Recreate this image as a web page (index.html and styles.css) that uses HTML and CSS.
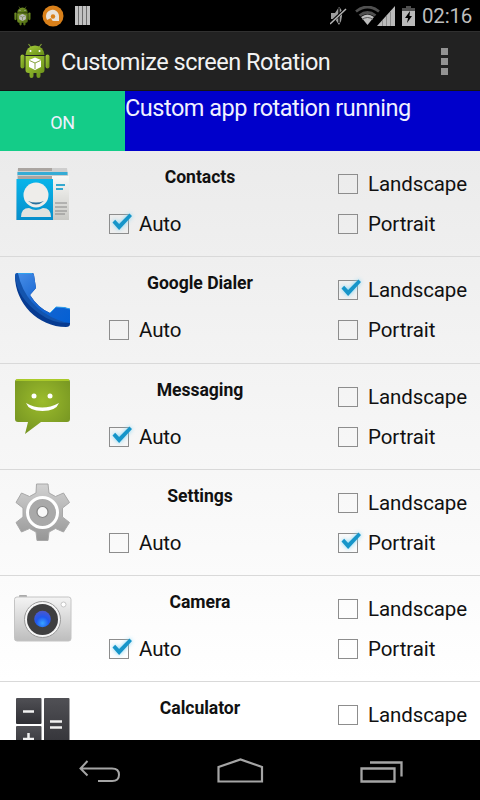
FILE: index.html
```html
<!DOCTYPE html>
<html lang="en">
<head>
<meta charset="utf-8">
<title>Customize screen Rotation</title>
<link rel="stylesheet" href="styles.css">
</head>
<body>
<svg class="defs" width="0" height="0">
  <defs>
    <linearGradient id="droid" x1="0" x2="1" y2="1"><stop offset="0" stop-color="#a8cf3c"/><stop offset="1" stop-color="#658c16"/></linearGradient>
    <linearGradient id="sky" x1="0" x2="0" y2="1"><stop offset="0" stop-color="#08b5ea"/><stop offset="1" stop-color="#078ecb"/></linearGradient>
    <linearGradient id="paper" x1="0" x2="0" y2="1"><stop offset="0" stop-color="#f8f8f6"/><stop offset="1" stop-color="#c9c9c5"/></linearGradient>
    <linearGradient id="phone" x1="0" x2="1" y2="1"><stop offset="0" stop-color="#4a90e8"/><stop offset=".5" stop-color="#1664d0"/><stop offset="1" stop-color="#0460d4"/></linearGradient>
    <radialGradient id="bubble" cx=".5" cy=".4" r=".7"><stop offset="0" stop-color="#9cbc2c"/><stop offset="1" stop-color="#739221"/></radialGradient>
    <linearGradient id="steel" x1="0" x2="0" y2="1"><stop offset="0" stop-color="#d2d2d2"/><stop offset="1" stop-color="#969696"/></linearGradient>
    <linearGradient id="body" x1="0" x2="0" y2="1"><stop offset="0" stop-color="#f4f4f4"/><stop offset="1" stop-color="#bdbdbd"/></linearGradient>
    <radialGradient id="lens" cx=".5" cy=".75" r=".75"><stop offset="0" stop-color="#38a4ff"/><stop offset=".5" stop-color="#2058ee"/><stop offset="1" stop-color="#4e58c8"/></radialGradient>
    <linearGradient id="key" x1="0" x2="0" y2="1"><stop offset="0" stop-color="#505055"/><stop offset="1" stop-color="#2f2f34"/></linearGradient>
    <symbol id="android" viewBox="0 0 30 36">
      <path d="M8.500 1l3 4M21.500 1l-3 4" stroke="#7e9c35" stroke-width="1.200"/>
      <path d="M5.500 12a9.500 9.500 0 0 1 19 0z" fill="url(#droid)"/>
      <circle cx="10.500" cy="8" r="1" fill="#fff"/><circle cx="19.500" cy="8" r="1" fill="#fff"/>
      <rect x=".5" y="11.500" width="4" height="14" rx="2" fill="url(#droid)"/><rect x="25.500" y="11.500" width="4" height="14" rx="2" fill="url(#droid)"/>
      <path d="M5.500 13h19v14q0 3-3 3h-1v3a2 2 0 0 1-4 0v-3h-3v3a2 2 0 0 1-4 0v-3h-1q-3 0-3-3z" fill="url(#droid)"/>
      <path d="M15 14.500l6 2.500v7l-6 3-6-3v-7z" fill="#fff"/><path d="M9.500 17.500l5.500 2.500 5.500-2.500M15 20v6" stroke="#86a33b" fill="none"/>
    </symbol>
    <symbol id="tick" viewBox="0 0 26 26"><path d="M4.500 12.500l2.700-2.700 3.900 4.100L21.500 3.500l2.500 2.600L11.100 20z" fill="#1695c9"/></symbol>
  </defs>
</svg>
<div class="screen">
  <div class="status">
    <svg class="s-droid" width="17" height="20"><use href="#android"/></svg>
    <svg class="s-avast" width="22" height="22" viewBox="0 0 22 22"><circle cx="11" cy="11" r="10.500" fill="#d9801a"/><path d="M6 16A6.500 6.500 0 1 1 17 11v5h-5q-4 0-4-4 0-3 3-3 2 0 2.500 2l-2 1v1.500" fill="#e8e2da"/><circle cx="11" cy="11.500" r="2.200" fill="#d9801a"/><path d="M4 15.500l5-2.500 2 4-4 1z" fill="#d9801a"/></svg>
    <svg class="s-bars" width="15" height="19" viewBox="0 0 15 19"><path d="M0 0h15v19H0z" fill="#c2c2c2"/><path d="M3.500 0v19M7.500 0v19M11.500 0v19" stroke="#6c6c6c"/></svg>
    <span class="grow"></span>
    <svg class="s-mute" width="17" height="20" viewBox="0 0 17 20"><path d="M1 7h4l4-6q4 3 3 9-.2 5-3 9l-4-6H1z" fill="#9d9d9d"/><path d="M9 2v15" stroke="#111" stroke-width="1.500"/><path d="M0 17.500L15.500 3" stroke="#000" stroke-width="3"/><path d="M0 18L16 3" stroke="#b5b5b5" stroke-width="1.500"/></svg>
    <svg class="s-wifi" width="25" height="19" viewBox="0 0 25 19"><path d="M1 5.500Q12.500-3.500 24 5.500M4.500 9.500q8-6 16 0" fill="none" stroke="#505050" stroke-width="2.800"/><path d="M6 11q6.500-5 13 0l-6.500 8z" fill="#bdbdbd"/><path d="M7 13.500q5.500-4 11 0" stroke="#555" fill="none"/></svg>
    <svg class="s-signal" width="18" height="20" viewBox="0 0 18 20"><path d="M0 20L18 0v20z" fill="#bababa"/><path d="M5.500 14v6M9.500 10v10M13.500 6v14" stroke="#8b8b8b"/></svg>
    <svg class="s-batt" width="13" height="20" viewBox="0 0 13 20"><path d="M4 0h5v2h4v4H0V2h4z" fill="#505050"/><path d="M0 5h13v15H0z" fill="#bababa"/><path d="M8 5L3 12h3L5 17l5-7H7.500z" fill="#000"/></svg>
    <span class="clock">02:16</span>
  </div>
  <header class="bar">
    <svg class="logo" width="30" height="36"><use href="#android"/></svg>
    <h1>Customize screen Rotation</h1>
    <div class="more"><i></i><i></i><i></i></div>
  </header>
  <div class="toggle"><div class="on">ON</div><div class="state">Custom app rotation running</div></div>
  <main class="list">
    <section class="row">
      <svg class="icon" viewBox="0 0 64 64"><path d="M8 5h49l1 8 1 44H6l1-44z" fill="#cecece"/><path d="M8 5h34v3H8z" fill="#aaa5a1"/><path d="M7.500 9h50v3h-50z" fill="#35acd5"/><path d="M8 13h34v3H8z" fill="#aaa5a1"/><path d="M42 13h17v44H42z" fill="url(#paper)"/><path d="M6.500 16H43v41H6.500z" fill="url(#sky)"/><circle cx="26" cy="32" r="12.500" fill="#eeedea"/><path d="M18 38q8 3 16 0-8 7-16 0z" fill="#286f9c"/><path d="M11 54q0-9 8-9 7 4 14 0 8 0 8 9z" fill="#e3e3df"/><path d="M46 22h9M46 26h7" stroke="#36a9cf" stroke-width="2"/><path d="M45 40h12M45 44h12M45 48h12M45 51h10" stroke="#888"/></svg>
      <h2>Contacts</h2>
      <label class="auto"><b class="box"><svg><use href="#tick"/></svg></b>Auto</label>
      <label class="land"><b class="box"></b>Landscape</label>
      <label class="port"><b class="box"></b>Portrait</label>
    </section>
    <section class="row">
      <svg class="icon" viewBox="0 0 64 64"><path d="M5 7Q5 4 8 4h14q2 0 2 2l2 13-6 7q8 13 20 18l6-6q10 0 14 2v15q0 3-4 3C28 58 5 34 5 7z" fill="#073b91"/><path d="M5 6q0-2 3-2h14q2 0 2 2l2 13-6 7q8 13 20 18l6-6q10 0 14 2v14C33 52 14 34 5 6z" fill="url(#phone)"/><path d="M5 7Q5 4 8 4l2 8q11 32 47 42-15 0-27-9Q7 29 5 7z" fill="#1454ad"/><path d="M8 4.500h14M40 44l6-6q9 0 14 2" fill="none" stroke="#2fa1ee"/></svg>
      <h2>Google Dialer</h2>
      <label class="auto"><b class="box"></b>Auto</label>
      <label class="land"><b class="box"><svg><use href="#tick"/></svg></b>Landscape</label>
      <label class="port"><b class="box"></b>Portrait</label>
    </section>
    <section class="row">
      <svg class="icon" viewBox="0 0 64 64"><path d="M8 3h49q3 0 3 3v37q0 3-3 3H31L15 58l3-12H8q-3 0-3-3V6q0-3 3-3z" fill="url(#bubble)"/><path d="M6 4h53" stroke="#b9d92d" stroke-width="1.500"/><circle cx="24" cy="20" r="2.500" fill="#fff"/><circle cx="40" cy="20" r="2.500" fill="#fff"/><path d="M16 27q16 9 33 0-3 8-16.500 8T16 27z" fill="#fff"/></svg>
      <h2>Messaging</h2>
      <label class="auto"><b class="box"><svg><use href="#tick"/></svg></b>Auto</label>
      <label class="land"><b class="box"></b>Landscape</label>
      <label class="port"><b class="box"></b>Portrait</label>
    </section>
    <section class="row">
      <svg class="icon" viewBox="0 0 64 64"><path d="M26.500 2h11.500l1 9 6.500 3.500 8-3.500 6 9.500-7 5.500v9l7 5.500-6 9.500-8-3.500-6.500 3.500-1 8.500H27l-1-8.500-6.500-3.500-8 3.500-5.500-9.500 7-5.500v-9l-7-5.500 5.500-9.500 8 3.500L26 11z" fill="url(#steel)" stroke="#a8a8a8" stroke-linejoin="round"/><circle cx="32.500" cy="30.500" r="15" fill="#a9a9a9" stroke="#fff" stroke-width="3"/><circle cx="32.500" cy="30" r="5.500" fill="#f8f8f8" stroke="#858585" stroke-width="1.200"/></svg>
      <h2>Settings</h2>
      <label class="auto"><b class="box"></b>Auto</label>
      <label class="land"><b class="box"></b>Landscape</label>
      <label class="port"><b class="box"><svg><use href="#tick"/></svg></b>Portrait</label>
    </section>
    <section class="row">
      <svg class="icon" viewBox="0 0 64 64"><rect x="9" y="7" width="8" height="4" rx="1" fill="#aaa"/><rect x="4.500" y="9" width="56.500" height="44" rx="2.500" fill="url(#body)" stroke="#c4c4c4"/><circle cx="32.500" cy="31.500" r="18" fill="#f6f6f6" stroke="#999"/><circle cx="32.500" cy="31.500" r="15.500" fill="#3f3f40"/><circle cx="32.500" cy="31" r="8.300" fill="url(#lens)"/><circle cx="53.500" cy="16.500" r="2.500" fill="#fff" stroke="#bbb" stroke-width=".8"/></svg>
      <h2>Camera</h2>
      <label class="auto"><b class="box"><svg><use href="#tick"/></svg></b>Auto</label>
      <label class="land"><b class="box"></b>Landscape</label>
      <label class="port"><b class="box"></b>Portrait</label>
    </section>
    <section class="row">
      <svg class="icon" viewBox="0 0 64 64"><rect x="6" y="4" width="25.500" height="26" rx="1" fill="url(#key)"/><rect x="34" y="4" width="25.500" height="54" rx="1" fill="url(#key)"/><rect x="6" y="32" width="25.500" height="26" rx="1" fill="url(#key)"/><path d="M13 17.500h11M40 27.500h12M40 33.500h12M13 45h11M18.500 39v12" stroke="#f1f1f1" stroke-width="2.500"/></svg>
      <h2>Calculator</h2>
      <label class="land"><b class="box"></b>Landscape</label>
    </section>
  </main>
  <nav class="nav">
    <svg width="44" height="26" viewBox="0 0 44 26"><path d="M10.500 4L3.500 11.500l7 7M4 11.500h31q7 0 7 6.300t-7 6.200H21" fill="none" stroke="#a5a5a5" stroke-width="2"/></svg>
    <svg width="48" height="26" viewBox="0 0 48 26"><path d="M1.500 24.500V10L23.500 2.500 45 10v14.500z" fill="none" stroke="#a5a5a5" stroke-width="2.200"/></svg>
    <svg width="44" height="26" viewBox="0 0 44 26"><path d="M1.500 11.500h33v13h-33zM10 5.500h31.500V19.500" fill="none" stroke="#a5a5a5" stroke-width="2.300"/></svg>
  </nav>
</div>
</body>
</html>
```
FILE: styles.css
```css
* { box-sizing: border-box; }
body { margin: 0; font-family: Roboto, "Liberation Sans", sans-serif; background: #000; }
h1, h2 { margin: 0; font-weight: 400; }
.defs { display: block; position: absolute; }
.screen { width: 480px; height: 800px; display: grid; grid-template-rows: 31px 60px 60px 589px 60px; overflow: hidden; }
.status { display: flex; align-items: center; padding: 0 7px 0 14px; color: #bdbdbd; white-space: nowrap; }
.status svg { flex: none; }
.s-droid { opacity: .75; }
.s-avast { margin-left: 11px; }
.s-bars { margin-left: 11px; }
.grow { flex: 1; }
.s-wifi { margin-left: 8px; }
.s-signal { margin-left: -3px; }
.s-batt { margin-left: 7px; }
.clock { font-size: 20.500px; line-height: 29px; padding-top: 2px; margin-left: 7px; width: 51px; letter-spacing: -.2px; }
.bar { display: flex; align-items: center; background: #222; border-top: 1px solid #303030; border-bottom: 1px solid #151515; padding: 0 32px 0 20px; color: #f3f3f3; }
.bar h1 { font-size: 23.500px; line-height: 30px; padding-top: 2px; margin-left: 11px; flex: 1; white-space: nowrap; letter-spacing: -.48px; }
.more { display: grid; gap: 3px; width: 7px; }
.more i { width: 7px; height: 7px; background: #939393; }
.toggle { display: grid; grid-template-columns: 125px 1fr; color: #f0f0ff; }
.on { display: flex; align-items: center; justify-content: center; background: #14cc88; font-size: 18px; letter-spacing: -.3px; padding-top: 2px; }
.state { background: #0000cb; font-size: 23.500px; line-height: 32px; padding-top: 1px; white-space: nowrap; letter-spacing: -.48px; }
.list { overflow: hidden; background: linear-gradient(#ebebeb, #fff 90%); color: #111; }
.row { height: 106.250px; display: grid; grid-template-columns: 99px 182px 47px 1fr; grid-template-rows: 40px 40px; padding: 13px 0 0 10px; border-bottom: 1.500px solid #d9d9d9; }
.icon { grid-area: 1 / 1 / 3 / 2; width: 64px; height: 64px; margin-top: -1px; }
.row h2 { grid-area: 1 / 2; text-align: center; font-size: 17.600px; font-weight: 700; line-height: 25px; padding-top: 1px; letter-spacing: -.05px; }
.row label { display: flex; align-items: center; font-size: 20.500px; gap: 10px; white-space: nowrap; letter-spacing: -.1px; }
.auto { grid-area: 2 / 2; }
.land { grid-area: 1 / 4; }
.port { grid-area: 2 / 4; }
.box { position: relative; width: 20px; height: 20px; border: 1px solid #8d8d8d; flex: none; }
.box svg { position: absolute; left: -2px; top: -5px; width: 26px; height: 26px; filter: drop-shadow(0 0 2px #7bd3f4); }
.nav { display: grid; grid-template-columns: 44px 48px 44px; justify-content: space-between; padding: 17px 76px 0 77px; }
```
